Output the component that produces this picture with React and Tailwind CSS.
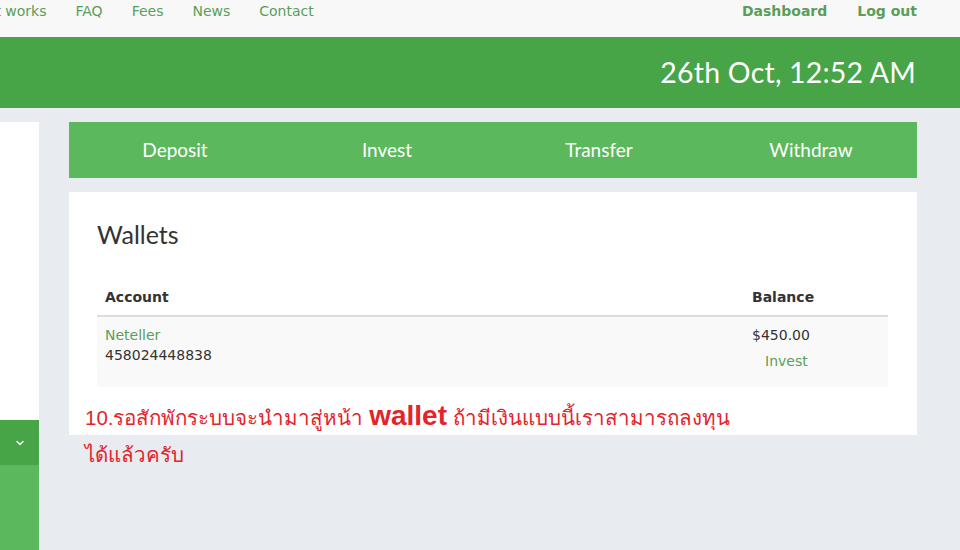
import { ChevronDown } from "lucide-react";

const navLinks = ["How it works", "FAQ", "Fees", "News", "Contact"];
const tabs = ["Deposit", "Invest", "Transfer", "Withdraw"];

const App = () => {
  return (
    <div className="relative w-[960px] h-[550px] overflow-hidden bg-[#e8ebf0]">
      {/* top nav */}
      <div className="h-[37px] bg-[#f8f8f8] flex justify-between text-[14px] text-[#5a9e5a] font-['DejaVu_Sans',sans-serif]">
        <ul className="flex -ml-[58px] pt-[1px]">
          {navLinks.map((l) => (
            <li key={l} className="px-[14.5px] leading-[20px] whitespace-nowrap">{l}</li>
          ))}
        </ul>
        <ul className="flex pr-[28px] pt-[1px] font-bold">
          <li className="px-[15px] leading-[20px]">Dashboard</li>
          <li className="px-[15px] leading-[20px]">Log out</li>
        </ul>
      </div>

      {/* header */}
      <div className="h-[71px] bg-[#47a447] flex items-center justify-end pr-[44px]">
        <span className="text-white text-[28.5px] font-['Lato',sans-serif] tracking-[0.2px]">
          26th Oct, 12:52 AM
        </span>
      </div>

      {/* body */}
      <div className="flex pt-[14px] h-[442px]">
        <div className="w-[39px] flex flex-col">
          <div className="h-[298px] bg-white"></div>
          <div className="h-[45px] bg-[#47a447] flex items-center justify-center text-white">
            <ChevronDown size={12} strokeWidth={3} />
          </div>
          <div className="flex-1 bg-[#5cb85c]"></div>
        </div>

        <div className="ml-[30px] w-[848px]">
          <div className="h-[56px] bg-[#5cb85c] grid grid-cols-4 text-white text-[19px] font-['Lato',sans-serif]">
            {tabs.map((t) => (
              <div key={t} className="flex items-center justify-center">{t}</div>
            ))}
          </div>

          <div className="mt-[14px] h-[243px] bg-white px-[28px] pt-[26px]">
            <h2 className="text-[25px] text-[#333] font-['Lato',sans-serif] leading-[32px]">Wallets</h2>
            <table className="w-[791px] mt-[29px] text-[14px] text-[#333] font-['DejaVu_Sans',sans-serif]">
              <thead>
                <tr className="border-b-2 border-[#dddddd]">
                  <th className="text-left px-[8px] py-[8px] font-bold leading-[20px]">Account</th>
                  <th className="text-left px-[8px] py-[8px] font-bold leading-[20px] w-[144px]">Balance</th>
                </tr>
              </thead>
              <tbody>
                <tr className="bg-[#f9f9f9] align-top">
                  <td className="px-[8px] pt-[8px] pb-[22px] leading-[20px]">
                    <div className="text-[#5a9e5a]">Neteller</div>
                    <div>458024448838</div>
                  </td>
                  <td className="px-[8px] pt-[8px] pb-[16px] leading-[20px]">
                    <div>$450.00</div>
                    <div className="text-[#5a9e5a] pl-[13px] mt-[6px]">Invest</div>
                  </td>
                </tr>
              </tbody>
            </table>
          </div>
        </div>
      </div>

      {/* annotation */}
      <div className="absolute left-[85px] top-[397px] w-[700px] text-[#e3242b] text-[20.5px] leading-[37px] font-['Liberation_Sans',sans-serif]">
        10.รอสักพักระบบจะนำมาสู่หน้า <span className="font-bold text-[28px]">wallet</span> ถ้ามีเงินแบบนี้เราสามารถลงทุน
        <br />
        ได้แล้วครับ
      </div>
    </div>
  );
};

export default App;
